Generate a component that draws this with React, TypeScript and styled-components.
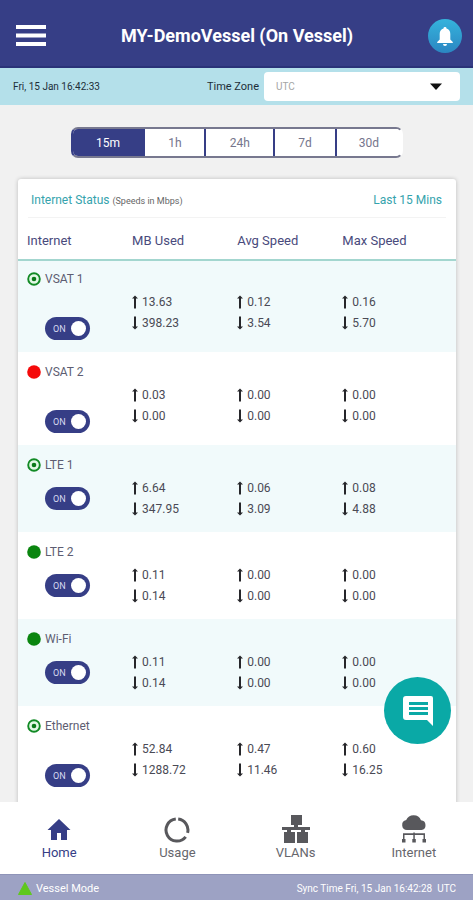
import React, { useState } from "react";
import styled, { createGlobalStyle } from "styled-components";

const navy = "#363e86";
const teal = "#0aa9a6";

const GlobalStyle = createGlobalStyle`
  *, *::before, *::after { box-sizing: border-box; }
  body { margin: 0; font-family: Roboto, "Liberation Sans", sans-serif; color: #4a4a55; background: #f1f1f1; }
  button, select, input { font: inherit; }
`;

const Shell = styled.div`
  position: relative;
  display: flex;
  flex-direction: column;
  height: 100vh;
`;

const TopBar = styled.header`
  display: flex;
  align-items: center;
  justify-content: space-between;
  height: 68px;
  flex: none;
  padding: 6px 11px 0 16px;
  background: ${navy};
  border-bottom: 2px solid #2a3378;
`;

const Title = styled.h1`
  margin: 0;
  font-size: 18px;
  line-height: 24px;
  font-weight: 700;
  color: #fff;
`;

const MenuButton = styled.button`
  display: flex;
  padding: 0;
  border: 0;
  background: none;
`;

const BellButton = styled.button`
  display: grid;
  place-items: center;
  width: 34px;
  height: 34px;
  padding: 0;
  border: 0;
  border-radius: 50%;
  background: linear-gradient(#35b3dc, #2b86c2);
`;

const ZoneBar = styled.div`
  display: flex;
  align-items: center;
  height: 37px;
  flex: none;
  padding: 0 13px;
  background: #b4e0ea;
  font-size: 10px;
  color: #1c2e38;
`;

const ZoneLabel = styled.label`
  margin-left: auto;
  font-size: 11px;
`;

const SelectWrap = styled.div`
  display: flex;
  align-items: center;
  flex: 0 0 196px;
  height: 29px;
  margin-left: 5px;
  padding-right: 18px;
  border-radius: 4px;
  background: #fff;
`;

const ZoneSelect = styled.select`
  flex: 1;
  height: 100%;
  padding: 0 12px;
  border: 0;
  background: none;
  appearance: none;
  color: #a5a5a5;
`;

const Main = styled.main`
  flex: 1;
  min-height: 0;
  overflow-y: auto;
  scrollbar-width: none;
  padding: 22px 17px 16px 18px;
`;

const Ranges = styled.div`
  display: flex;
  width: 76%;
  height: 31px;
  margin: 0 auto 21px;
  border: 2px solid #77788f;
  border-color: #77788f transparent #77788f ${navy};
  border-radius: 7px;
  overflow: hidden;
  background: #fff;
`;

const RangeButton = styled.button<{ $active: boolean; $grow: number }>`
  flex: ${(p) => p.$grow} 1 0;
  padding: 0;
  border: 0;
  background: ${(p) => (p.$active ? navy : "#fff")};
  color: ${(p) => (p.$active ? "#fff" : "#75758c")};
  font-size: 12px;
  & + & { border-left: 2px solid ${navy}; }
`;

const Card = styled.section`
  padding-bottom: 8px;
  background: #fff;
  border-radius: 3px;
  box-shadow: 0 0 4px rgba(0, 0, 0, 0.22);
`;

const CardHead = styled.div`
  display: flex;
  align-items: center;
  justify-content: space-between;
  height: 39px;
  margin: 0 10px;
  padding: 3px 4px 0 3px;
  border-bottom: 1px solid #f3f3f3;
  color: #35a3ad;
  font-size: 12px;
`;

const CardTitle = styled.h2`
  margin: 0;
  font-size: 12px;
  font-weight: 400;
`;

const Hint = styled.small`
  font-size: 9px;
  color: #666;
`;

const Table = styled.table`
  width: 100%;
  table-layout: fixed;
  border-spacing: 0;
`;

const HeadCell = styled.th`
  width: 24%;
  height: 41px;
  padding: 4px 0 0 9px;
  text-align: left;
  font-size: 13px;
  font-weight: 400;
  color: #494a7c;
  &:last-child { width: 28%; }
`;

const Row = styled.tr`
  &:nth-child(odd) { background: #f1fafb; }
  &:first-child > * { box-shadow: inset 0 2px #a3d6cf; }
`;

const NameCell = styled.th`
  padding: 12px 0 12px 9px;
  text-align: left;
  vertical-align: top;
  font-weight: 400;
  font-size: 12px;
`;

const Name = styled.div<{ $spaced: boolean }>`
  display: flex;
  align-items: center;
  gap: 4px;
  height: 16px;
  margin-bottom: ${(p) => (p.$spaced ? 30 : 14)}px;
  color: #5d5d72;
`;

const Switch = styled.label`
  position: relative;
  display: flex;
  align-items: center;
  justify-content: space-between;
  width: 45px;
  height: 23px;
  margin-left: 18px;
  padding: 0 4px 0 8px;
  border-radius: 12px;
  background: ${navy};
  color: #d8daf0;
  font-size: 9px;
  &:has(input:not(:checked)) { background: #9a9cab; flex-direction: row-reverse; }
`;

const SwitchInput = styled.input`
  position: absolute;
  inset: 0;
  width: 100%;
  height: 100%;
  margin: 0;
  opacity: 0;
`;

const Knob = styled.span`
  width: 15px;
  height: 15px;
  border-radius: 50%;
  background: #fff;
`;

const ValueCell = styled.td`
  padding: 32px 0 13px 9px;
  vertical-align: top;
  font-size: 12px;
`;

const Value = styled.div`
  display: flex;
  align-items: center;
  gap: 4px;
  height: 21px;
`;

const ChatButton = styled.button`
  position: absolute;
  right: 22px;
  bottom: 156px;
  display: grid;
  place-items: center;
  width: 67px;
  height: 67px;
  padding: 0;
  border: 0;
  border-radius: 50%;
  background: ${teal};
`;

const Nav = styled.nav`
  display: grid;
  grid-template-columns: repeat(4, 1fr);
  height: 72px;
  flex: none;
  background: #fff;
`;

const NavLink = styled.a<{ $active?: boolean }>`
  display: flex;
  flex-direction: column;
  align-items: center;
  padding-top: 12px;
  font-size: 13px;
  line-height: 14px;
  text-decoration: none;
  color: ${(p) => (p.$active ? navy : "#66666c")};
  svg { color: ${(p) => (p.$active ? navy : "#58585c")}; }
`;

const StatusBar = styled.footer`
  display: flex;
  align-items: center;
  gap: 4px;
  height: 26px;
  flex: none;
  padding: 2px 17px 0 18px;
  background: #9da2c4;
  border-top: 1px solid #8f94b8;
  color: #fff;
  font-size: 11px;
`;

const SyncTime = styled.span`
  margin-left: auto;
  font-size: 10px;
`;

function StatusDot({ kind }: { kind: string }) {
  if (kind === "target")
    return (
      <svg width="14" height="14" viewBox="0 0 14 14" aria-hidden="true">
        <circle cx="7" cy="7" r="5.8" fill="#e2f8e5" stroke="#128a25" strokeWidth="1.9" />
        <circle cx="7" cy="7" r="2.3" fill="#0b7a1a" />
      </svg>
    );
  return (
    <svg width="14" height="14" viewBox="0 0 14 14" aria-hidden="true">
      <circle cx="7" cy="7" r="6.8" fill={kind === "red" ? "#f50a0a" : "#0a850f"} />
    </svg>
  );
}

function Arrow({ down }: { down?: boolean }) {
  return (
    <svg width="6" height="14" viewBox="0 0 6 14" aria-label={down ? "Down" : "Up"}>
      <path
        d={down ? "M2 0.5h2v10h2L3 13.5 0 10.500h2z" : "M3 0.5 6 3.500H4v10H2v-10H0z"}
        fill="#26262a"
      />
    </svg>
  );
}

const HomeIcon = () => (
  <svg width="24" height="32" viewBox="0 0 24 32" fill="currentColor" aria-hidden="true">
    <path d="M12 5 23.500 16H20v10h-6v-7h-4v7H4V16H.5z" />
  </svg>
);

const UsageIcon = () => (
  <svg width="26" height="32" viewBox="0 0 26 32" fill="none" stroke="currentColor" strokeWidth="3" aria-hidden="true">
    <path d="M14.200 5.100A11 11 0 0 1 23.600 18.800M21.700 22.800A11 11 0 1 1 11.800 5.100" />
  </svg>
);

const VlanIcon = () => (
  <svg width="28" height="32" viewBox="0 0 28 32" fill="currentColor" aria-hidden="true">
    <path d="M9 1h11v10h-4v2h12v3h-5v2h3v11H15V18h4v-2H9v2h4v11H2V18h3v-2H0v-3h12v-2H9z" />
  </svg>
);

const CloudIcon = () => (
  <svg width="26" height="32" viewBox="0 0 26 32" fill="currentColor" aria-hidden="true">
    <path d="M6 16a5 5 0 0 1-.8-9.900A8 8 0 0 1 20 6.300 4.900 4.900 0 0 1 20.500 16z" />
    <path d="M12.300 18.500h1.500v.8H24V25h-1.500v-4h-8.700v4h-1.500v-4H3.500v4H2v-5.700h10.300z" />
    <path d="M1 25h3.500v3.500H1zM11.300 25h3.500v3.500h-3.500zM21.500 25H25v3.500h-3.500z" />
  </svg>
);

const rows = [
  { name: "VSAT 1", dot: "target", spaced: true, values: [["13.63", "398.23"], ["0.12", "3.54"], ["0.16", "5.70"]] },
  { name: "VSAT 2", dot: "red", spaced: true, values: [["0.03", "0.00"], ["0.00", "0.00"], ["0.00", "0.00"]] },
  { name: "LTE 1", dot: "target", spaced: false, values: [["6.64", "347.95"], ["0.06", "3.09"], ["0.08", "4.88"]] },
  { name: "LTE 2", dot: "green", spaced: false, values: [["0.11", "0.14"], ["0.00", "0.00"], ["0.00", "0.00"]] },
  { name: "Wi-Fi", dot: "green", spaced: false, values: [["0.11", "0.14"], ["0.00", "0.00"], ["0.00", "0.00"]] },
  { name: "Ethernet", dot: "target", spaced: true, values: [["52.84", "1288.72"], ["0.47", "11.46"], ["0.60", "16.25"]] },
];

const ranges = [
  { label: "15m", grow: 73 },
  { label: "1h", grow: 61 },
  { label: "24h", grow: 69 },
  { label: "7d", grow: 61 },
  { label: "30d", grow: 67 },
];

function PowerSwitch({ name }: { name: string }) {
  const [on, setOn] = useState(true);
  return (
    <Switch>
      <SwitchInput type="checkbox" role="switch" aria-label={name} checked={on} onChange={() => setOn(!on)} />
      <span>{on ? "ON" : "OFF"}</span>
      <Knob />
    </Switch>
  );
}

export default function App() {
  const [range, setRange] = useState("15m");
  return (
    <Shell>
      <GlobalStyle />
      <TopBar>
        <MenuButton aria-label="Menu">
          <svg width="30" height="22" viewBox="0 0 30 22" fill="#fff" aria-hidden="true">
            <path d="M0 0h30v4H0zM0 8.500h30v4H0zM0 17h30v4H0z" />
          </svg>
        </MenuButton>
        <Title>MY-DemoVessel (On Vessel)</Title>
        <BellButton aria-label="Notifications">
          <svg width="16" height="19" viewBox="0 0 16 19" fill="#fff" aria-hidden="true">
            <path d="M8 0a1.500 1.500 0 0 1 1.500 1.600C12 2.400 13.300 4.500 13.300 7v5.500L15.800 15v1H.2v-1l2.500-2.500V7c0-2.500 1.300-4.600 3.800-5.400A1.500 1.500 0 0 1 8 0zM6 17h4a2 2 0 0 1-4 0z" />
          </svg>
        </BellButton>
      </TopBar>
      <ZoneBar>
        <time>Fri, 15 Jan 16:42:33</time>
        <ZoneLabel htmlFor="zone">Time Zone</ZoneLabel>
        <SelectWrap>
          <ZoneSelect id="zone" defaultValue="UTC">
            <option>UTC</option>
          </ZoneSelect>
          <svg width="12" height="7" viewBox="0 0 12 7" aria-hidden="true">
            <path d="M0 .5h12L6 7z" fill="#111" />
          </svg>
        </SelectWrap>
      </ZoneBar>
      <Main>
        <Ranges role="group" aria-label="Time range">
          {ranges.map((r) => (
            <RangeButton
              key={r.label}
              $active={range === r.label}
              $grow={r.grow}
              aria-pressed={range === r.label}
              onClick={() => setRange(r.label)}
            >
              {r.label}
            </RangeButton>
          ))}
        </Ranges>
        <Card>
          <CardHead>
            <CardTitle>
              Internet Status <Hint>(Speeds in Mbps)</Hint>
            </CardTitle>
            <span>Last 15 Mins</span>
          </CardHead>
          <Table>
            <thead>
              <tr>
                <HeadCell scope="col">Internet</HeadCell>
                <HeadCell scope="col">MB Used</HeadCell>
                <HeadCell scope="col">Avg Speed</HeadCell>
                <HeadCell scope="col">Max Speed</HeadCell>
              </tr>
            </thead>
            <tbody>
              {rows.map((row) => (
                <Row key={row.name}>
                  <NameCell scope="row">
                    <Name $spaced={row.spaced}>
                      <StatusDot kind={row.dot} />
                      {row.name}
                    </Name>
                    <PowerSwitch name={row.name} />
                  </NameCell>
                  {row.values.map(([up, down], i) => (
                    <ValueCell key={i}>
                      <Value><Arrow />{up}</Value>
                      <Value><Arrow down />{down}</Value>
                    </ValueCell>
                  ))}
                </Row>
              ))}
            </tbody>
          </Table>
        </Card>
      </Main>
      <ChatButton aria-label="Messages">
        <svg width="32" height="32" viewBox="0 0 32 32" aria-hidden="true">
          <path d="M4 1h25a2 2 0 0 1 2 2v28l-6-6H4a3 3 0 0 1-3-3V4a3 3 0 0 1 3-3z" fill="#fff" />
          <path d="M7 7h19v3H7zM7 12h19v3H7zM7 17h19v3H7z" fill={teal} />
        </svg>
      </ChatButton>
      <Nav>
        <NavLink href="#home" $active><HomeIcon />Home</NavLink>
        <NavLink href="#usage"><UsageIcon />Usage</NavLink>
        <NavLink href="#vlans"><VlanIcon />VLANs</NavLink>
        <NavLink href="#internet"><CloudIcon />Internet</NavLink>
      </Nav>
      <StatusBar>
        <svg width="14" height="13" viewBox="0 0 14 13" aria-hidden="true">
          <path d="M7 0.500 13.500 12.500H.5z" fill="#5fc81e" stroke="#5fc81e" />
        </svg>
        <span>Vessel Mode</span>
        <SyncTime>Sync Time Fri, 15 Jan 16:42:28 &nbsp;UTC</SyncTime>
      </StatusBar>
    </Shell>
  );
}
